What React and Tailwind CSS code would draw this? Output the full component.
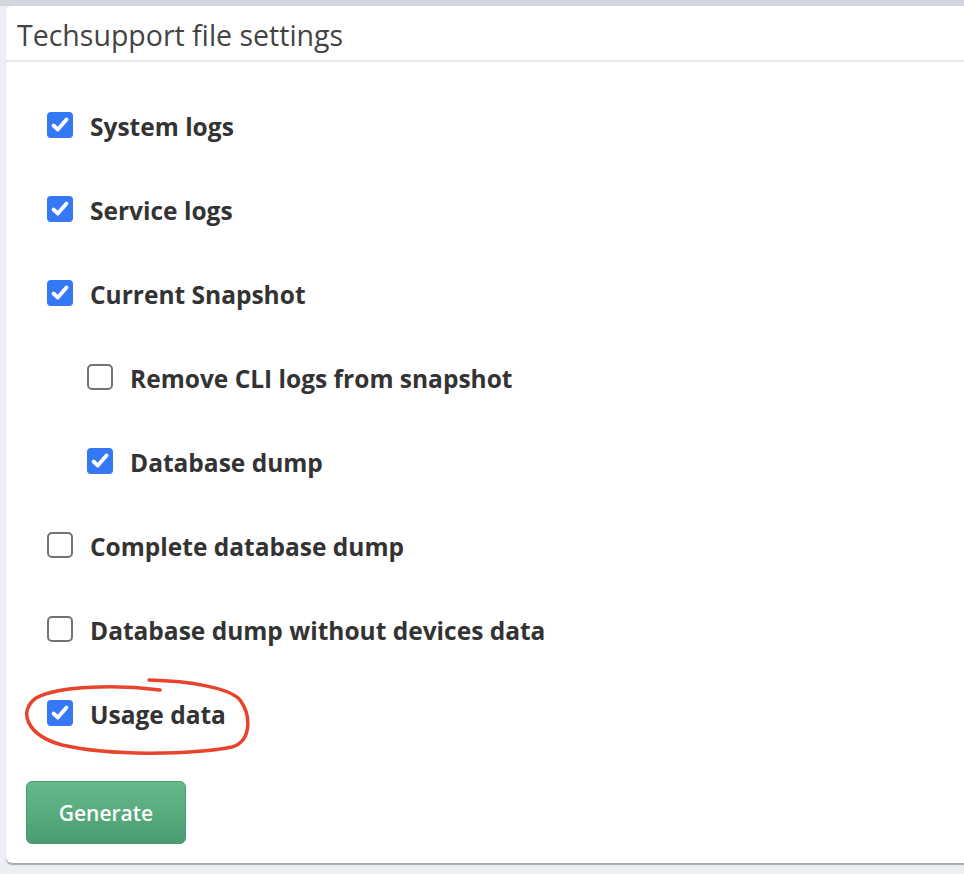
import React, { useState } from "react";

const items = [
  { id: "system", label: "System logs", checked: true, nested: false },
  { id: "service", label: "Service logs", checked: true, nested: false },
  { id: "snapshot", label: "Current Snapshot", checked: true, nested: false },
  { id: "cli", label: "Remove CLI logs from snapshot", checked: false, nested: true },
  { id: "dbdump", label: "Database dump", checked: true, nested: true },
  { id: "fulldump", label: "Complete database dump", checked: false, nested: false },
  { id: "nodevices", label: "Database dump without devices data", checked: false, nested: false },
  { id: "usage", label: "Usage data", checked: true, nested: false },
];

function Box({ checked }) {
  return checked ? (
    <span className="flex h-[26px] w-[26px] shrink-0 items-center justify-center rounded-[4px] bg-[#3478f6]">
      <svg width="26" height="26" viewBox="0 0 26 26" fill="none">
        <path d="M6.5 13.5 L10.8 17.6 L19.5 7.5" stroke="white" strokeWidth="3.8" strokeLinecap="round" strokeLinejoin="round" />
      </svg>
    </span>
  ) : (
    <span className="block h-[26px] w-[26px] shrink-0 rounded-[5px] border-2 border-[#737373] bg-white" />
  );
}

export default function App() {
  const [state, setState] = useState(
    Object.fromEntries(items.map((i) => [i.id, i.checked]))
  );

  const toggle = (id) => setState((s) => ({ ...s, [id]: !s[id] }));

  return (
    <div
      className="min-h-screen bg-[linear-gradient(#d4d6df_0_6px,#eceff4_6px)] pt-[6px] pl-[6px]"
      style={{ fontFamily: "'Open Sans', 'Noto Sans', sans-serif" }}
    >
      <div className="rounded-l-[6px] bg-white shadow-[0_2px_1px_#a9a9ad]">
        <div className="flex h-[56px] items-center border-b-2 border-[#e8e8e8] pl-[11px] pt-[4px] text-[28.5px] text-[#444444]">
          Techsupport file settings
        </div>
        <div className="pt-[21px] pb-[19px]">
          {items.map((item) => (
            <div
              key={item.id}
              className={`relative flex h-[84px] cursor-pointer items-center gap-[17px] ${item.nested ? "pl-[81px]" : "pl-[41px]"}`}
              onClick={() => toggle(item.id)}
            >
              <Box checked={state[item.id]} />
              <span className="pt-[4px] text-[24.5px] font-bold text-[#333333]">{item.label}</span>
              {item.id === "usage" && (
                <svg
                  className="pointer-events-none absolute left-0 top-0"
                  width="260"
                  height="84"
                  viewBox="6 672 260 84"
                  fill="none"
                >
                  <path
                    d="M160 691 C 120 686, 60 686, 36 699 C 18 712, 26 736, 62 746 C 110 757, 190 756, 232 748 C 252 742, 251 716, 240 701 C 230 689, 190 682, 149 681"
                    stroke="#e8432b"
                    strokeWidth="3.5"
                    strokeLinecap="round"
                  />
                </svg>
              )}
            </div>
          ))}
          <div className="pl-[20px] pt-[26px]">
            <button className="h-[63px] w-[160px] rounded-[6px] border border-[#4a9a6d] bg-[linear-gradient(#66ba8a,#4a9c70)] pt-[3px] text-[21px] font-semibold text-white">
              Generate
            </button>
          </div>
        </div>
      </div>
    </div>
  );
}
